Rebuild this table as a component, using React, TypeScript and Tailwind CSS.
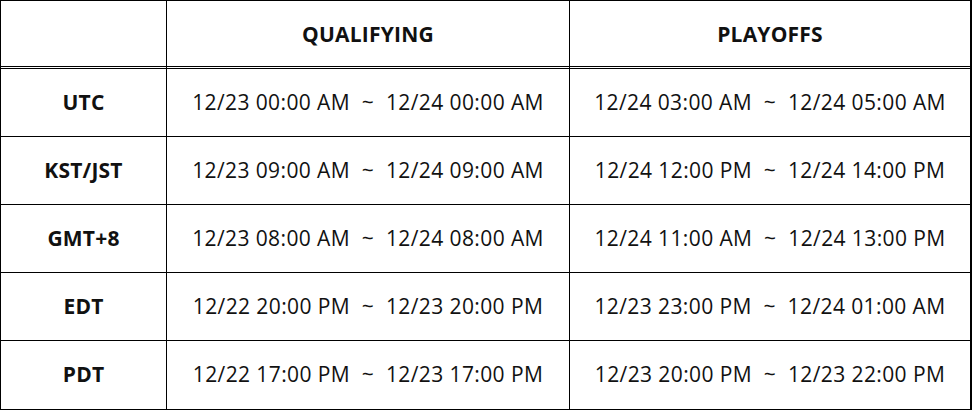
const rows = [
  { zone: "UTC", qualifying: "12/23 00:00 AM ~ 12/24 00:00 AM", playoffs: "12/24 03:00 AM ~ 12/24 05:00 AM" },
  { zone: "KST/JST", qualifying: "12/23 09:00 AM ~ 12/24 09:00 AM", playoffs: "12/24 12:00 PM ~ 12/24 14:00 PM" },
  { zone: "GMT+8", qualifying: "12/23 08:00 AM ~ 12/24 08:00 AM", playoffs: "12/24 11:00 AM ~ 12/24 13:00 PM" },
  { zone: "EDT", qualifying: "12/22 20:00 PM ~ 12/23 20:00 PM", playoffs: "12/23 23:00 PM ~ 12/24 01:00 AM" },
  { zone: "PDT", qualifying: "12/22 17:00 PM ~ 12/23 17:00 PM", playoffs: "12/23 20:00 PM ~ 12/23 22:00 PM" },
]

export default function App() {
  return (
    <div
      className="w-[974px] h-[410px] bg-white text-[#111]"
      style={{ fontFamily: '"Open Sans", "Noto Sans CJK KR", sans-serif' }}
    >
      <div className="w-[972px] border-l border-t border-r-2 border-b-2 border-black grid grid-cols-[166px_403px_1fr]">
        {/* header */}
        <div className="h-[68px] border-r border-b-[3px] border-double border-black" />
        <div className="h-[68px] pt-[2px] border-r border-b-[3px] border-double border-black flex items-center justify-center text-[21px] font-bold tracking-[0.2px]">
          QUALIFYING
        </div>
        <div className="h-[68px] pt-[2px] border-b-[3px] border-double border-black flex items-center justify-center text-[21px] font-bold tracking-[0.2px]">
          PLAYOFFS
        </div>

        {rows.map((r, i) => {
          const last = i === rows.length - 1
          const b = last ? "" : "border-b"
          return (
            <div key={r.zone} className="contents">
              <div className={`h-[68px] border-r border-black ${b} flex items-center justify-center text-[21px] font-bold tracking-[0.2px]`}>
                {r.zone}
              </div>
              <div className={`h-[68px] border-r border-black ${b} flex items-center justify-center text-[21px] tracking-[0.4px] whitespace-pre`}>
                {r.qualifying.replace(" ~ ", "  ~  ")}
              </div>
              <div className={`h-[68px] border-black ${b} flex items-center justify-center text-[21px] tracking-[0.4px] whitespace-pre`}>
                {r.playoffs.replace(" ~ ", "  ~  ")}
              </div>
            </div>
          )
        })}
      </div>
    </div>
  )
}
